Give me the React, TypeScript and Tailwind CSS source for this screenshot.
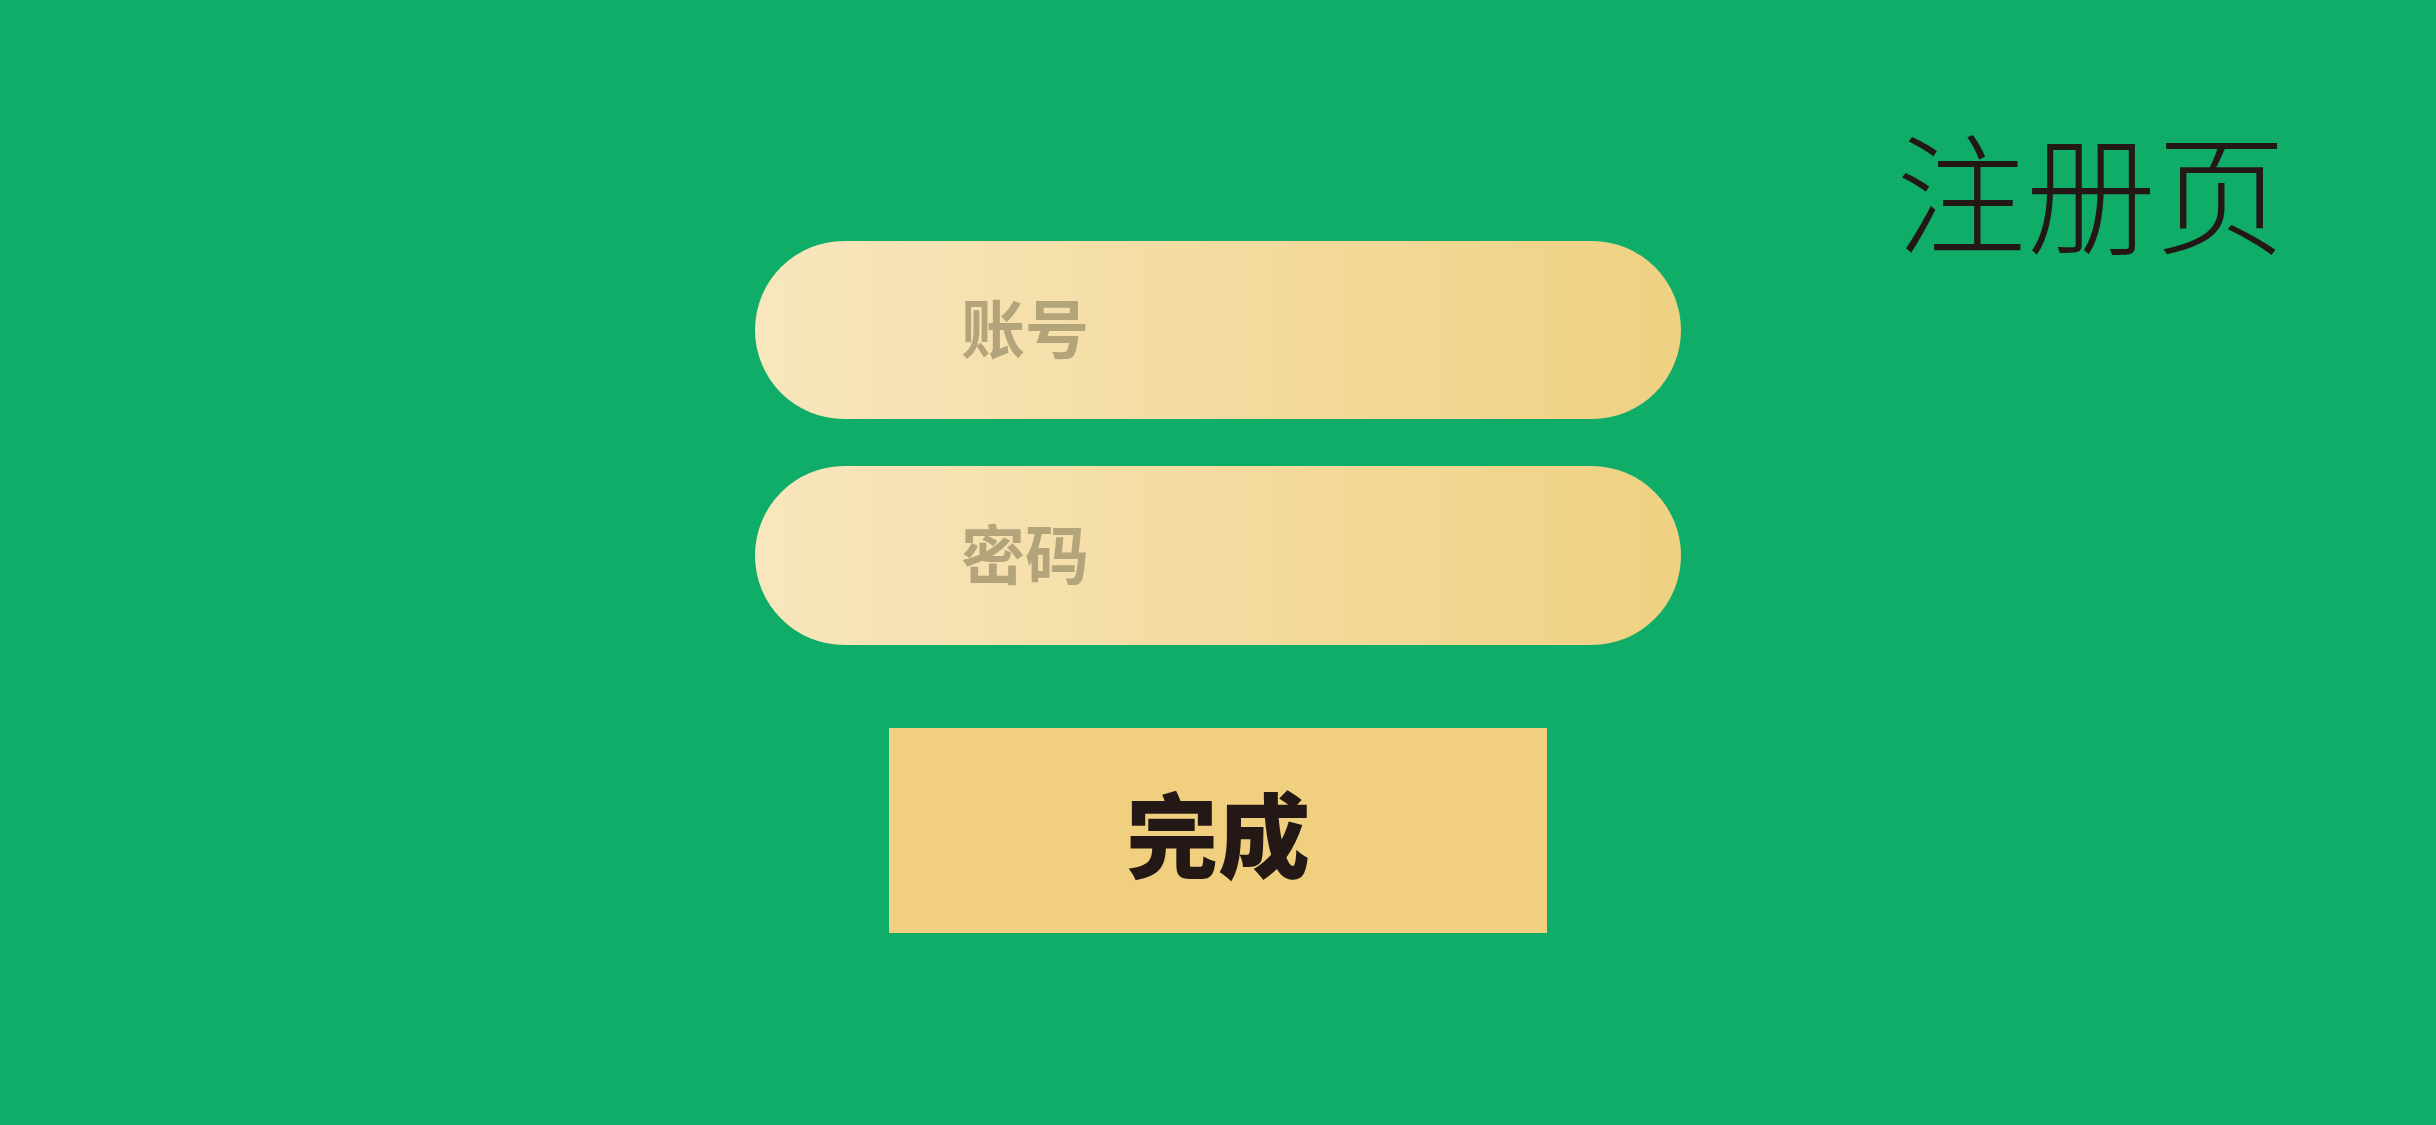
export default function App() {
  const cjk = { fontFamily: '"Noto Sans CJK SC", "Noto Sans", sans-serif' };

  return (
    <main
      className="grid h-[1125px] w-full grid-cols-[1fr_926px_1fr] bg-[#0fad68]"
      style={cjk}
    >
      <div />

      <section className="flex flex-col items-center pt-[241px]">
        <div className="flex h-[178px] w-full items-center rounded-full bg-gradient-to-r from-[#f8e6bd] to-[#efd182] pb-[10px] pl-[206px]">
          <span className="text-[64px] leading-none font-bold text-[#b4a47c]">账号</span>
        </div>

        <div className="mt-[47px] flex h-[179px] w-full items-center rounded-full bg-gradient-to-r from-[#f8e6bd] to-[#efd182] pb-[10px] pl-[206px]">
          <span className="text-[64px] leading-none font-bold text-[#b4a47c]">密码</span>
        </div>

        <button className="mt-[83px] flex h-[205px] w-[658px] items-center justify-center bg-[#f0d07f]">
          <span className="text-[92px] leading-none font-black text-[#231815]">完成</span>
        </button>
      </section>

      <header className="flex justify-end pt-[122px] pr-[150px]">
        <h1 className="text-[130px] leading-none font-light text-[#231815]">注册页</h1>
      </header>
    </main>
  );
}
